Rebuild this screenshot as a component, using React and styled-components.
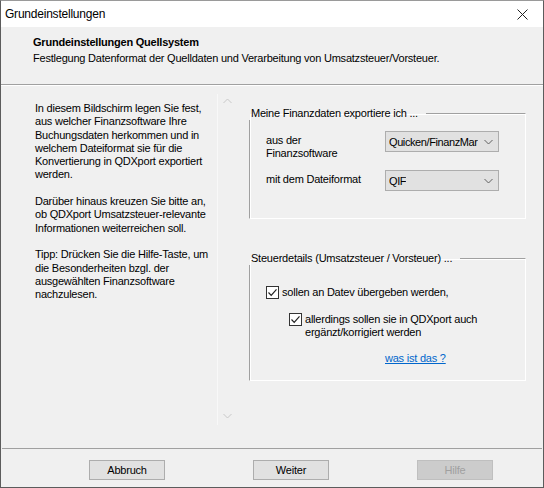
import React from "react";
import styled, { createGlobalStyle } from "styled-components";

const GlobalStyle = createGlobalStyle`
  html, body {
    margin: 0;
    padding: 0;
    background: #f0f0f0;
  }
  * {
    box-sizing: border-box;
  }
`;

const Window = styled.div`
  width: 544px;
  height: 488px;
  display: flex;
  flex-direction: column;
  background: #f0f0f0;
  border: 1px solid #5c5c5c;
  border-top-color: #9a9a9a;
  font-family: "Liberation Sans", Arial, sans-serif;
  font-size: 11px;
  letter-spacing: -0.22px;
  color: #000;
  overflow: hidden;
`;

const TitleBar = styled.div`
  height: 26px;
  flex: none;
  display: flex;
  align-items: center;
  justify-content: space-between;
  background: #fff;
  padding-left: 4px;
  font-size: 12px;
`;

const CloseButton = styled.div`
  width: 42px;
  height: 26px;
  display: flex;
  align-items: center;
  justify-content: center;
`;

const Header = styled.div`
  height: 58px;
  flex: none;
  padding: 8px 0 0 32px;
  border-bottom: 1px solid #a0a0a0;
  box-shadow: 0 1px 0 #fff;
`;

const HeaderTitle = styled.div`
  font-weight: bold;
  font-size: 11px;
  line-height: 14px;
`;

const HeaderText = styled.div`
  line-height: 14px;
  margin-top: 2px;
`;

const Body = styled.div`
  flex: 1;
  display: flex;
  padding: 9px 17px 0 32px;
  gap: 13px;
`;

const InfoBox = styled.div`
  width: 203px;
  height: 331px;
  flex: none;
  display: flex;
`;

const InfoText = styled.div`
  flex: 1;
  padding: 8px 4px 0 2px;
  line-height: 13.3px;
  white-space: pre;
  overflow: hidden;
`;

const ScrollTrack = styled.div`
  width: 19px;
  flex: none;
  display: flex;
  flex-direction: column;
  justify-content: space-between;
  align-items: center;
  border-left: 1px solid #f8f8f8;
  padding: 4px 0 6px;
`;

const RightColumn = styled.div`
  flex: 1;
  display: flex;
  flex-direction: column;
  padding-top: 13px;
`;

const Group = styled.fieldset`
  margin: 0 0 ${(p) => p.$gap || 0}px 0;
  padding: 0;
  height: ${(p) => p.$height}px;
  min-width: 0;
  border: 1px solid;
  border-color: #a0a0a0 #ffffff #ffffff #a0a0a0;
  box-shadow: inset 1px 1px 0 #fff;
`;

const Legend = styled.legend`
  padding: 0 8px 0 2px;
  margin-left: -1px;
  line-height: 13px;
`;

const FormGrid = styled.div`
  display: grid;
  grid-template-columns: 119px 114px;
  row-gap: 10px;
  align-items: start;
  padding: 11px 0 0 16px;
`;

const Label = styled.div`
  line-height: 13px;
  margin-top: 3px;
`;

const Combo = styled.div`
  height: 21px;
  display: flex;
  align-items: center;
  justify-content: space-between;
  gap: 2px;
  background: #e1e1e1;
  border: 1px solid #adadad;
  padding: 0 5px 0 3px;
  white-space: nowrap;
  overflow: hidden;
  letter-spacing: -0.4px;
`;

const ComboValue = styled.span`
  overflow: hidden;
`;

const CheckRow = styled.label`
  display: flex;
  align-items: flex-start;
  gap: 3px;
  margin-left: ${(p) => p.$indent}px;
  margin-top: ${(p) => p.$top}px;
  line-height: 13px;
`;

const CheckBox = styled.span`
  width: 13px;
  height: 13px;
  flex: none;
  background: #fff;
  border: 1px solid #333;
  display: flex;
  align-items: center;
  justify-content: center;
`;

const LinkRow = styled.div`
  padding: 13px 0 0 135px;
`;

const Link = styled.a`
  color: #0066cc;
  text-decoration: underline;
  cursor: pointer;
`;

const Footer = styled.div`
  height: 39px;
  flex: none;
  display: flex;
  align-items: flex-start;
  gap: 88px;
  padding: 11px 0 0 87px;
  margin: 0 1px;
  border-top: 1px solid #a0a0a0;
`;

const Button = styled.button`
  width: 76px;
  height: 20px;
  padding: 0;
  font-family: inherit;
  font-size: 11px;
  letter-spacing: inherit;
  background: ${(p) => (p.disabled ? "#cccccc" : "#e1e1e1")};
  color: ${(p) => (p.disabled ? "#a0a0a0" : "#000")};
  border: 1px solid ${(p) => (p.disabled ? "#bfbfbf" : "#adadad")};
`;

const Chevron = ({ up, color = "#a8a8a8" }) => (
  <svg width="9" height="6" viewBox="0 0 9 6" style={{ flex: "none" }}>
    <path
      d={up ? "M0.5 5 L4.5 1 L8.5 5" : "M0.5 1 L4.5 5 L8.5 1"}
      fill="none"
      stroke={color}
      strokeWidth="1"
    />
  </svg>
);

const Check = () => (
  <svg width="11" height="11" viewBox="0 0 11 11">
    <path d="M1.5 5.5 L4.2 8.3 L9.5 2.3" fill="none" stroke="#222" strokeWidth="1.2" />
  </svg>
);

export default function App() {
  return (
    <>
      <GlobalStyle />
      <Window>
        <TitleBar>
          <span>Grundeinstellungen</span>
          <CloseButton>
            <svg width="11" height="11" viewBox="0 0 11 11">
              <path d="M0.5 0.5 L10.5 10.5 M10.5 0.5 L0.5 10.5" stroke="#222" strokeWidth="1" />
            </svg>
          </CloseButton>
        </TitleBar>
        <Header>
          <HeaderTitle>Grundeinstellungen Quellsystem</HeaderTitle>
          <HeaderText>
            Festlegung Datenformat der Quelldaten und Verarbeitung von Umsatzsteuer/Vorsteuer.
          </HeaderText>
        </Header>
        <Body>
          <InfoBox>
            <InfoText>
              {"In diesem Bildschirm legen Sie fest,\naus welcher Finanzsoftware Ihre\nBuchungsdaten herkommen und in\nwelchem Dateiformat sie für die\nKonvertierung in QDXport exportiert\nwerden.\n\nDarüber hinaus kreuzen Sie bitte an,\nob QDXport Umsatzsteuer-relevante\nInformationen weiterreichen soll.\n\nTipp: Drücken Sie die Hilfe-Taste, um\ndie Besonderheiten bzgl. der\nausgewählten Finanzsoftware\nnachzulesen."}
            </InfoText>
            <ScrollTrack>
              <Chevron up color="#c8c8c8" />
              <Chevron color="#c8c8c8" />
            </ScrollTrack>
          </InfoBox>
          <RightColumn>
            <Group $height={112} $gap={33}>
              <Legend>Meine Finanzdaten exportiere ich ...</Legend>
              <FormGrid>
                <Label>
                  aus der
                  <br />
                  Finanzsoftware
                </Label>
                <Combo>
                  <ComboValue>Quicken/FinanzMar</ComboValue>
                  <Chevron color="#606060" />
                </Combo>
                <Label>mit dem Dateiformat</Label>
                <Combo>
                  <ComboValue>QIF</ComboValue>
                  <Chevron color="#606060" />
                </Combo>
              </FormGrid>
            </Group>
            <Group $height={129}>
              <Legend>Steuerdetails (Umsatzsteuer / Vorsteuer) ...</Legend>
              <CheckRow $indent={16} $top={21}>
                <CheckBox>
                  <Check />
                </CheckBox>
                <span>sollen an Datev übergeben werden,</span>
              </CheckRow>
              <CheckRow $indent={39} $top={14}>
                <CheckBox>
                  <Check />
                </CheckBox>
                <span>
                  allerdings sollen sie in QDXport auch
                  <br />
                  ergänzt/korrigiert werden
                </span>
              </CheckRow>
              <LinkRow>
                <Link>was ist das ?</Link>
              </LinkRow>
            </Group>
          </RightColumn>
        </Body>
        <Footer>
          <Button>Abbruch</Button>
          <Button>Weiter</Button>
          <Button disabled>Hilfe</Button>
        </Footer>
      </Window>
    </>
  );
}
